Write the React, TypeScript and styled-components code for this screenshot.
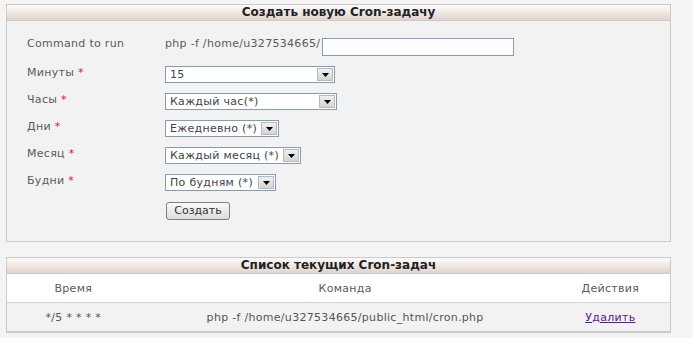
import React from 'react';
import styled, { createGlobalStyle } from 'styled-components';

const GlobalStyle = createGlobalStyle`
  html, body {
    margin: 0;
    padding: 0;
    background: #f4f4f4;
    font-family: "DejaVu Sans", Verdana, sans-serif;
    font-size: 11px;
    letter-spacing: 0.3px;
    color: #555;
  }
`;

const Page = styled.div`
  width: 665px;
  padding: 4px 0 0 6px;
  display: flex;
  flex-direction: column;
  gap: 15px;
`;

const Panel = styled.div<{ $thickBottom?: boolean }>`
  border: 1px solid #cbcbcb;
  border-bottom-width: ${(p) => (p.$thickBottom ? '2px' : '1px')};
  background: #f2f2f2;
`;

const PanelTitle = styled.div`
  height: 15px;
  line-height: 15px;
  border-bottom: 1px solid #cbcbcb;
  background: linear-gradient(to bottom, #fcfbfa 0%, #efe9e5 50%, #e0d4cc 100%);
  text-align: center;
  font-weight: bold;
  font-size: 12px;
  letter-spacing: 0;
  color: #222;
`;

const FormGrid = styled.div`
  display: grid;
  grid-template-columns: 138px auto;
  row-gap: 10px;
  padding: 16px 0 21px 20px;
  align-items: start;
`;

const Label = styled.div`
  line-height: 13px;
  color: #5a5a5a;
`;

const Required = styled.span`
  color: #e8141c;
`;

const CommandCell = styled.div`
  display: flex;
  align-items: flex-start;
  gap: 2px;
`;

const Prefix = styled.span`
  color: #5a5a5a;
  line-height: 13px;
`;

const TextInput = styled.input`
  width: 192px;
  height: 18px;
  box-sizing: border-box;
  border: 1px solid #7f9db9;
  background: #fff;
  margin: 1px 0 0;
  padding: 0 3px;
  font: inherit;
`;

const Select = styled.div<{ $width: number }>`
  width: ${(p) => p.$width}px;
  height: 17px;
  box-sizing: border-box;
  border: 1px solid #7f9db9;
  background: #fff;
  display: flex;
  align-items: stretch;
  color: #444;
`;

const SelectValue = styled.span`
  flex: 1;
  padding-left: 4px;
  line-height: 16px;
  white-space: nowrap;
  overflow: hidden;
`;

const ArrowBox = styled.span`
  width: 16px;
  margin: 1px;
  box-sizing: border-box;
  border: 1px solid #b8b8b8;
  background: linear-gradient(to bottom, #f0f0f0, #d4d4d4);
  display: flex;
  align-items: flex-end;
  justify-content: center;
  padding-bottom: 3px;
`;

const Button = styled.button`
  width: 64px;
  height: 18px;
  margin: 1px 0 0 1px;
  padding: 0;
  border: 1px solid #808080;
  border-radius: 3px;
  background: linear-gradient(to bottom, #fafafa, #dcdcdc);
  font: inherit;
  font-size: 11px;
  color: #333;
  line-height: 14px;
`;

const Table = styled.table`
  width: 100%;
  border-collapse: collapse;
`;

const HeadRow = styled.tr`
  background: #fff;
  border-bottom: 1px solid #d4d4d4;
`;

const Th = styled.th<{ $width?: string }>`
  font-weight: normal;
  height: 28px;
  padding: 0;
  text-align: center;
  color: #5a5a5a;
  width: ${(p) => p.$width ?? 'auto'};
`;

const Td = styled.td`
  height: 28px;
  padding: 0;
  text-align: center;
  color: #555;
`;

const DeleteLink = styled.a`
  color: #551a8b;
  text-decoration: underline;
`;

const Arrow = () => (
  <svg width="7" height="4" viewBox="0 0 7 4">
    <path d="M0 0h7L3.5 4z" fill="#000" />
  </svg>
);

const Dropdown = ({ value, width }: { value: string; width: number }) => (
  <Select $width={width}>
    <SelectValue>{value}</SelectValue>
    <ArrowBox>
      <Arrow />
    </ArrowBox>
  </Select>
);

const fields = [
  { label: 'Минуты', value: '15', width: 170 },
  { label: 'Часы', value: 'Каждый час(*)', width: 172 },
  { label: 'Дни', value: 'Ежедневно (*)', width: 114 },
  { label: 'Месяц', value: 'Каждый месяц (*)', width: 136 },
  { label: 'Будни', value: 'По будням (*)', width: 111 },
];

export default function App() {
  return (
    <>
      <GlobalStyle />
      <Page>
        <Panel>
          <PanelTitle>Создать новую Cron-задачу</PanelTitle>
          <FormGrid>
            <Label>Command to run</Label>
            <CommandCell>
              <Prefix>php -f /home/u327534665/</Prefix>
              <TextInput type="text" />
            </CommandCell>
            {fields.map((f) => (
              <React.Fragment key={f.label}>
                <Label>
                  {f.label} <Required>*</Required>
                </Label>
                <Dropdown value={f.value} width={f.width} />
              </React.Fragment>
            ))}
            <span />
            <div>
              <Button type="button">Создать</Button>
            </div>
          </FormGrid>
        </Panel>
        <Panel $thickBottom>
          <PanelTitle>Список текущих Cron-задач</PanelTitle>
          <Table>
            <thead>
              <HeadRow>
                <Th $width="20%">Время</Th>
                <Th>Команда</Th>
                <Th $width="18%">Действия</Th>
              </HeadRow>
            </thead>
            <tbody>
              <tr>
                <Td>*/5 * * * *</Td>
                <Td>php -f /home/u327534665/public_html/cron.php</Td>
                <Td>
                  <DeleteLink href="#">Удалить</DeleteLink>
                </Td>
              </tr>
            </tbody>
          </Table>
        </Panel>
      </Page>
    </>
  );
}
